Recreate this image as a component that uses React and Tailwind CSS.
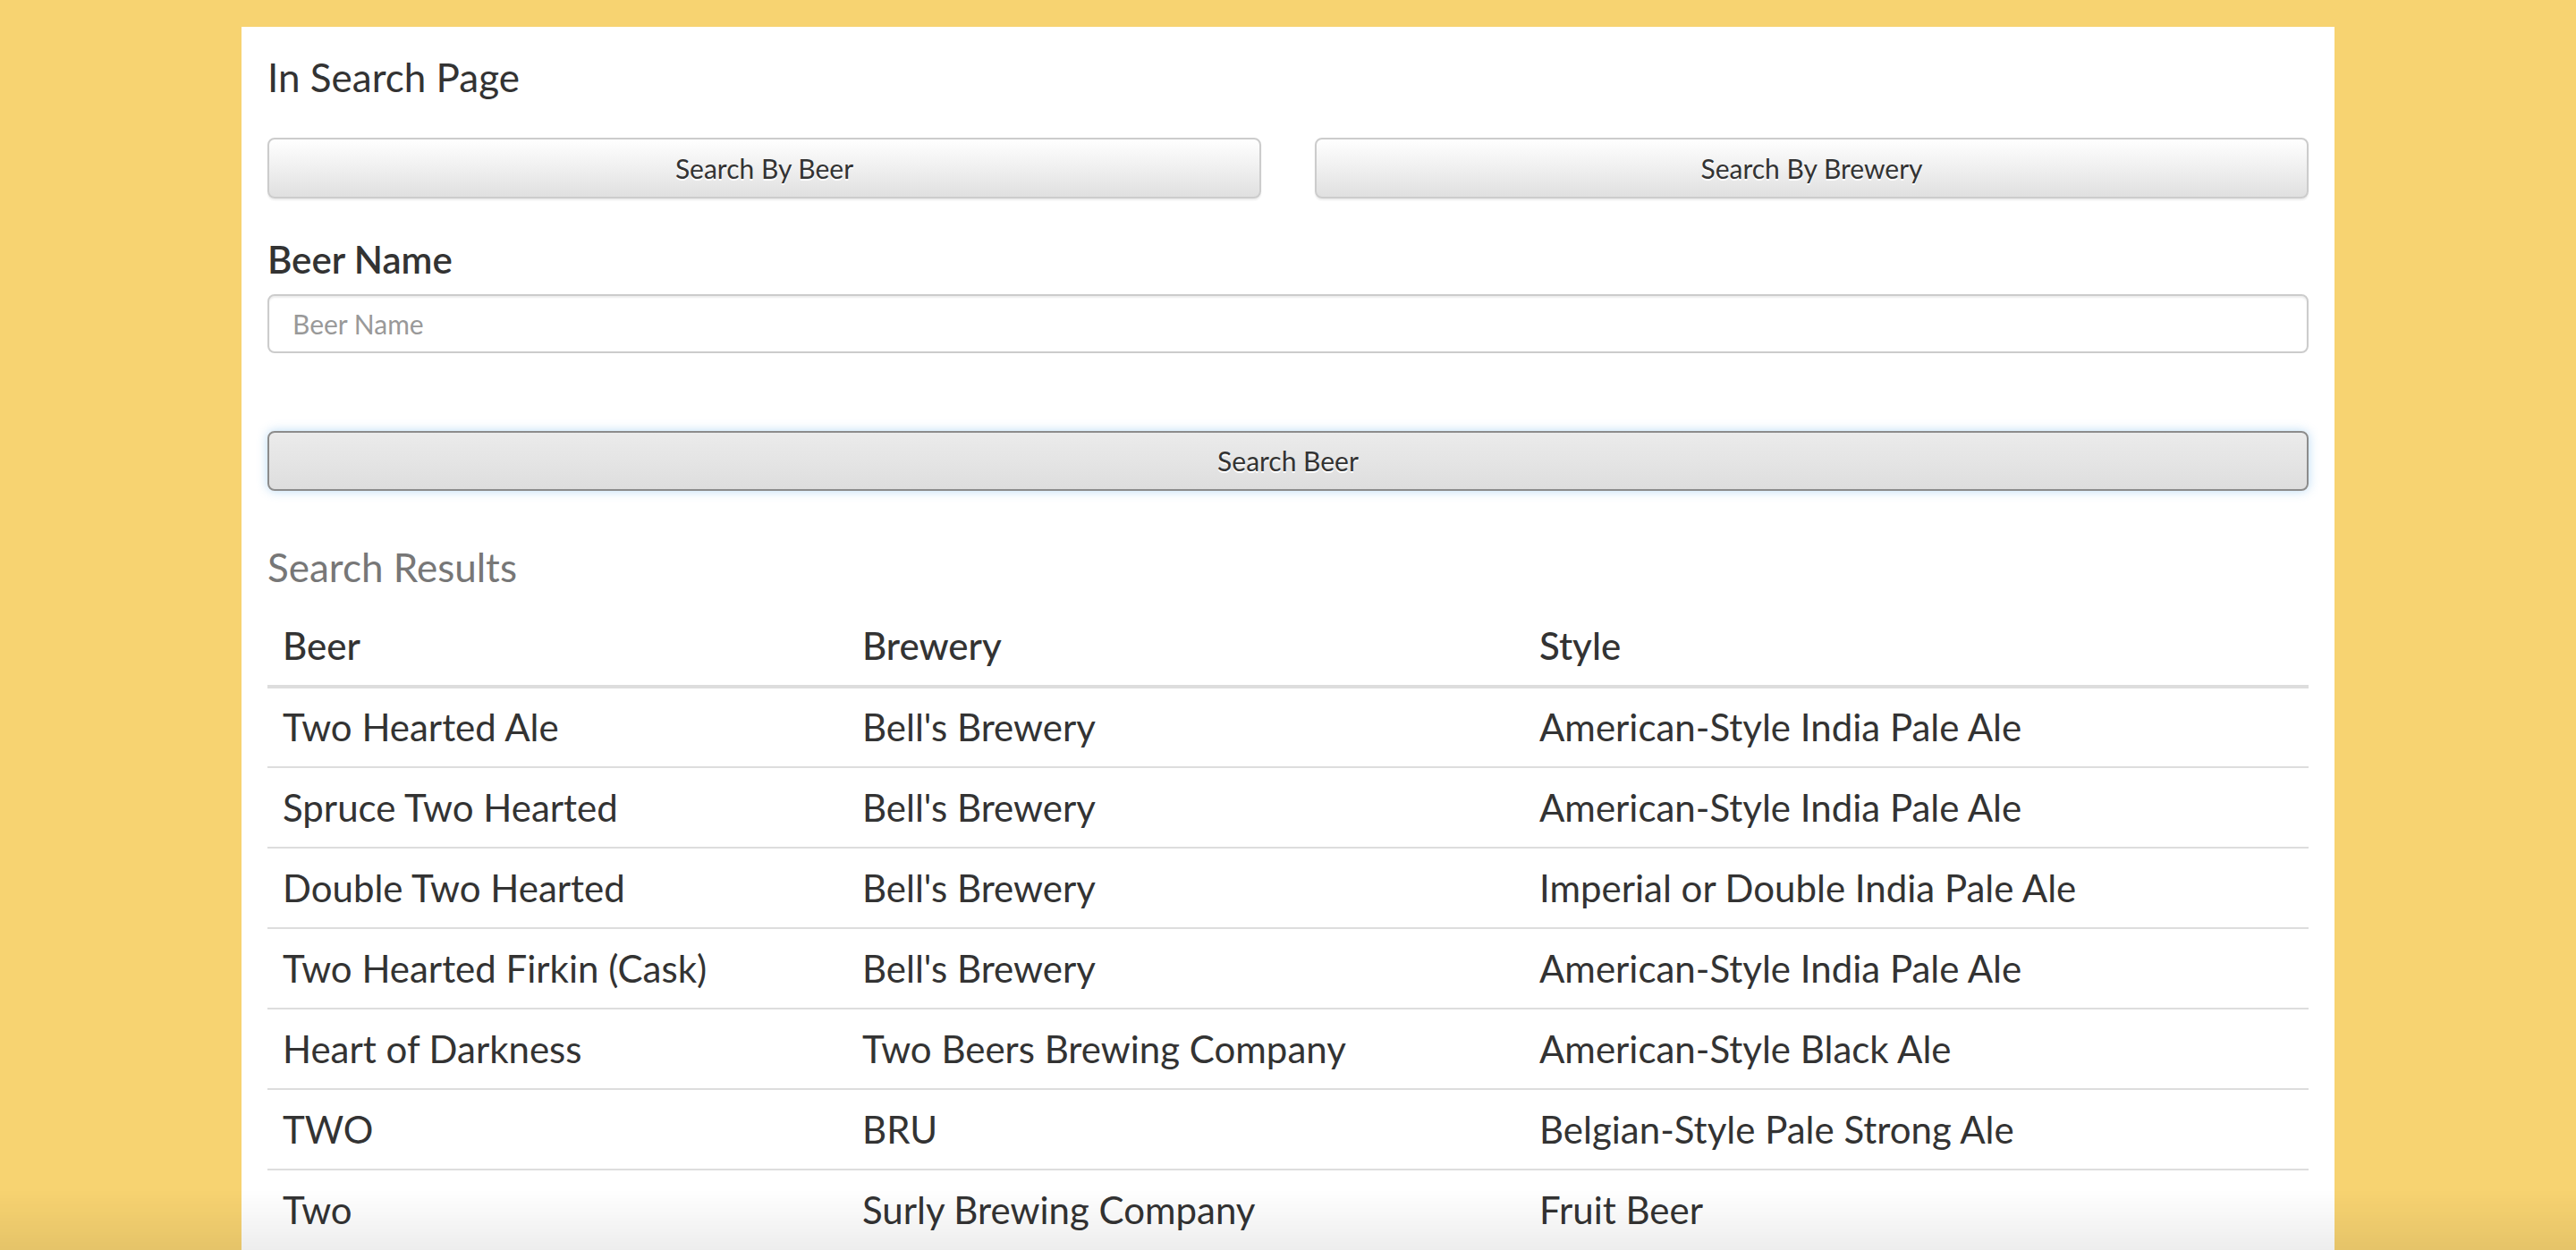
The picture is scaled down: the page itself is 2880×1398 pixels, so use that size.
import React from 'react';

const rows = [
  ['Two Hearted Ale', "Bell's Brewery", 'American-Style India Pale Ale'],
  ['Spruce Two Hearted', "Bell's Brewery", 'American-Style India Pale Ale'],
  ['Double Two Hearted', "Bell's Brewery", 'Imperial or Double India Pale Ale'],
  ['Two Hearted Firkin (Cask)', "Bell's Brewery", 'American-Style India Pale Ale'],
  ['Heart of Darkness', 'Two Beers Brewing Company', 'American-Style Black Ale'],
  ['TWO', 'BRU', 'Belgian-Style Pale Strong Ale'],
  ['Two', 'Surly Brewing Company', 'Fruit Beer'],
];

const btn =
  'h-[68px] w-full rounded-[8px] border-2 border-[#cccccc] bg-gradient-to-b from-white to-[#e0e0e0] text-[30px] text-[#333] shadow-[0_2px_2px_rgba(0,0,0,0.075)] [text-shadow:0_2px_0_#fff]';

export default function App() {
  return (
    <div className="relative flex h-screen flex-col overflow-hidden bg-[#f7d371] pt-[30px] font-['Lato','Open_Sans',sans-serif] text-[#333]">
      <div className="mx-auto w-[2340px] flex-1 bg-white px-[29px] pt-[28px]">
        <h1 className="h-[56px] text-[44px] font-normal leading-[56px]">In Search Page</h1>

        <div className="mt-[40px] grid grid-cols-2 gap-[60px]">
          <button className={btn}>Search By Beer</button>
          <button className={btn}>Search By Brewery</button>
        </div>

        <label className="mt-[42px] block h-[52px] text-[42px] font-semibold leading-[52px]">Beer Name</label>
        <input
          placeholder="Beer Name"
          className="mt-[13px] block h-[66px] w-full rounded-[8px] border-2 border-[#cccccc] px-[26px] text-[30px] text-[#555] shadow-[inset_0_2px_2px_rgba(0,0,0,0.075)] outline-none placeholder:text-[#999]"
        />

        <button className="mt-[87px] h-[67px] w-full rounded-[8px] border-2 border-[#8c8c8c] bg-gradient-to-b from-[#ebebeb] to-[#dedede] text-[30px] text-[#333] shadow-[0_0_12px_rgba(102,175,233,0.45)] [text-shadow:0_2px_0_#fff]">
          Search Beer
        </button>

        <h3 className="mt-[57px] h-[56px] text-[44px] font-normal leading-[56px] text-[#777]">Search Results</h3>

        <table className="mt-[16px] w-full table-fixed border-collapse text-left text-[42px]">
          <colgroup>
            <col className="w-[648px]" />
            <col className="w-[757px]" />
            <col />
          </colgroup>
          <thead>
            <tr className="border-b-[4px] border-[#dddddd]">
              <th className="h-[90px] pl-[17px] font-medium">Beer</th>
              <th className="h-[90px] pl-[17px] font-medium">Brewery</th>
              <th className="h-[90px] pl-[17px] font-medium">Style</th>
            </tr>
          </thead>
          <tbody>
            {rows.map((r, i) => (
              <tr key={i} className={i > 0 ? 'border-t-2 border-[#dddddd]' : ''}>
                {r.map((c, j) => (
                  <td key={j} className="h-[90px] pl-[17px] font-normal">{c}</td>
                ))}
              </tr>
            ))}
          </tbody>
        </table>
      </div>

      {/* screen shadow at the bottom of the shot */}
      <div className="pointer-events-none fixed inset-x-0 bottom-0 h-[68px] bg-gradient-to-b from-transparent to-black/[0.07]" />
    </div>
  );
}
